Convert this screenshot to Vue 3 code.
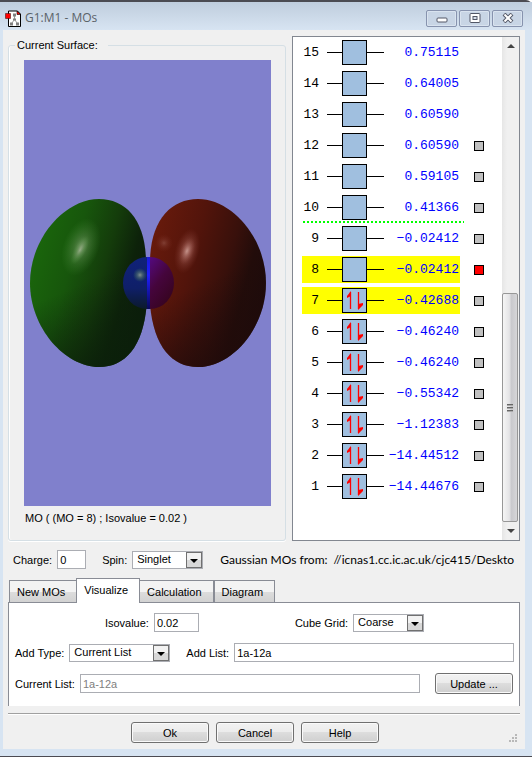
<template>
  <div class="window">
    <header class="titlebar">
      <svg class="app-icon" width="16" height="17" viewBox="0 0 16 17" aria-hidden="true">
        <path d="M3.500 1h9l3 3v12.500h-12z" fill="#fff" stroke="#000" />
        <path d="M12 1v3.500h3.500z" fill="#f00" stroke="#000" stroke-width=".6" />
        <path d="M9.500 5v5M9.500 9.500l-3 4M9.500 9.500l3 4" stroke="#999" fill="none" />
        <path d="M8 3.500h3v3h-3zM8 8.500h3v2h-3zM5 12.500h3v3h-3zM11 12.500h3v3h-3z" fill="#808080" />
        <path d="M.5 3.500h5v5h-5z" fill="#f00" stroke="#300" stroke-width=".5" />
      </svg>
      <h1>G1:M1 - MOs</h1>
      <div class="window-buttons">
        <button type="button" aria-label="Minimize">
          <svg width="12" height="10" viewBox="0 0 12 10">
            <rect x="1" y="5" width="10" height="4" rx="1" fill="#fff" stroke="#525766" />
          </svg>
        </button>
        <button type="button" aria-label="Maximize">
          <svg width="12" height="10" viewBox="0 0 12 10">
            <rect x="1" y=".5" width="10" height="9" rx="1" fill="#fff" stroke="#525766" />
            <rect x="4" y="3.500" width="4" height="3" fill="#d5deea" stroke="#525766" />
          </svg>
        </button>
        <button type="button" aria-label="Close">
          <svg width="12" height="10" viewBox="0 0 12 10">
            <path d="M2 1l8 8M10 1l-8 8" stroke="#525766" stroke-width="4" />
            <path d="M2.500 1.500l7 7M9.500 1.500l-7 7" stroke="#fff" stroke-width="2" />
          </svg>
        </button>
      </div>
    </header>

    <main class="client">
      <div class="views">
        <fieldset class="surface">
          <legend>Current Surface:</legend>
          <div class="surface-body">
            <svg class="canvas" viewBox="0 0 247 446" preserveAspectRatio="xMidYMid meet" role="img" aria-label="Molecular orbital">
              <defs>
                <linearGradient id="green" x1="0" y1=".1" x2="1" y2=".5">
                  <stop offset="0" stop-color="#1b6b0c" />
                  <stop offset=".4" stop-color="#17560c" />
                  <stop offset=".65" stop-color="#143c0b" />
                  <stop offset=".85" stop-color="#0d220a" />
                  <stop offset="1" stop-color="#0b1c0b" />
                </linearGradient>
                <linearGradient id="red" x1="0" y1=".1" x2="1" y2=".5">
                  <stop offset="0" stop-color="#6b1b0c" />
                  <stop offset=".4" stop-color="#52140b" />
                  <stop offset=".68" stop-color="#38100b" />
                  <stop offset=".85" stop-color="#220c0a" />
                  <stop offset="1" stop-color="#1e0b0b" />
                </linearGradient>
                <linearGradient id="shadeGreen" x1=".3" y1="0" x2=".6" y2="1">
                  <stop offset=".5" stop-color="#0b200a" stop-opacity="0" />
                  <stop offset="1" stop-color="#0b200a" stop-opacity=".8" />
                </linearGradient>
                <linearGradient id="shadeRed" x1=".3" y1="0" x2=".6" y2="1">
                  <stop offset=".5" stop-color="#200b0a" stop-opacity="0" />
                  <stop offset="1" stop-color="#200b0a" stop-opacity=".8" />
                </linearGradient>
                <radialGradient id="shine">
                  <stop offset="0" stop-color="#b0bca0" stop-opacity=".7" />
                  <stop offset=".4" stop-color="#80a870" stop-opacity=".4" />
                  <stop offset="1" stop-color="#50a040" stop-opacity="0" />
                </radialGradient>
                <radialGradient id="shineRed">
                  <stop offset="0" stop-color="#d0a098" stop-opacity=".7" />
                  <stop offset=".4" stop-color="#b07068" stop-opacity=".4" />
                  <stop offset="1" stop-color="#904038" stop-opacity="0" />
                </radialGradient>
                <linearGradient id="atomLeft" x1="0" y1="0" x2="0" y2="1">
                  <stop offset="0" stop-color="#10227a" />
                  <stop offset=".6" stop-color="#0f1f68" />
                  <stop offset="1" stop-color="#0b1a2c" />
                </linearGradient>
                <linearGradient id="atomRight" x1="0" y1="0" x2=".6" y2="1">
                  <stop offset="0" stop-color="#540a80" />
                  <stop offset=".5" stop-color="#45053c" />
                  <stop offset="1" stop-color="#36041f" />
                </linearGradient>
                <linearGradient id="atomMid" x1="0" y1="0" x2="0" y2="1">
                  <stop offset="0" stop-color="#1a1ad8" />
                  <stop offset=".35" stop-color="#2020ff" />
                  <stop offset="1" stop-color="#080858" />
                </linearGradient>
              </defs>
              <path :d="lobe" fill="url(#green)" />
              <path :d="lobe" fill="url(#shadeGreen)" />
              <ellipse cx="57" cy="187" rx="18" ry="30" transform="rotate(20 57 187)" fill="url(#shine)" opacity=".8" />
              <ellipse cx="56" cy="190" rx="6" ry="16" transform="rotate(28 56 190)" fill="url(#shine)" />
              <path :d="lobeRight" fill="url(#red)" />
              <path :d="lobeRight" fill="url(#shadeRed)" />
              <ellipse cx="163" cy="191" rx="12" ry="23" transform="rotate(15 163 191)" fill="url(#shineRed)" />
              <ellipse cx="163" cy="191" rx="7" ry="14" transform="rotate(20 163 191)" fill="url(#shineRed)" />
              <ellipse cx="140" cy="183" rx="9" ry="9" fill="url(#shineRed)" opacity=".4" />
              <path d="M123 197a24 26 0 0 0 0 52z" fill="url(#atomLeft)" />
              <path d="M126 197a24 26 0 0 1 0 52z" fill="url(#atomRight)" />
              <path d="M123 197h3v52h-3z" fill="url(#atomMid)" />
              <circle cx="116" cy="215" r="7" fill="url(#shine)" />
            </svg>
            <p>MO ( (MO = 8) ; Isovalue = 0.02 )</p>
          </div>
        </fieldset>

        <section class="levels" aria-label="Molecular orbitals">
          <ol>
            <li v-for="mo in orbitals" :key="mo.id" :class="{ lumo: mo.id === 10 }">
              <div class="level" :class="{ marked: mo.id === 7 || mo.id === 8 }">
                <span class="number">{{ mo.id }}</span>
                <span class="bar">
                  <span class="box">
                    <svg v-if="mo.id < 8" width="23" height="23" viewBox="0 0 23 23">
                      <path d="M7.500 20V3M15.500 3v17" fill="none" stroke="#f00" stroke-width="1.300" />
                      <path d="M8 2v5L4 9V7zM15 21v-6l5-1v2z" fill="#f00" />
                    </svg>
                  </span>
                </span>
                <span class="energy">{{ mo.energy }}</span>
              </div>
              <input
                v-if="mo.id < 13"
                v-model="selected"
                type="checkbox"
                :value="mo.id"
                :aria-label="'Orbital ' + mo.id"
              />
            </li>
          </ol>
          <div class="scrollbar">
            <button type="button" aria-label="Scroll up">
              <svg width="8" height="4" viewBox="0 0 8 4"><path d="M0 4l4-4 4 4z" fill="#444" /></svg>
            </button>
            <div class="track">
              <div class="thumb"><i></i><i></i><i></i></div>
            </div>
            <button type="button" aria-label="Scroll down">
              <svg width="8" height="4" viewBox="0 0 8 4"><path d="M0 0l4 4 4-4z" fill="#444" /></svg>
            </button>
          </div>
        </section>
      </div>

      <div class="row info">
        <label for="charge">Charge:</label>
        <input id="charge" v-model="charge" class="short" type="text" />
        <label for="spin" class="spaced">Spin:</label>
        <span class="select">
          <select id="spin" v-model="spin">
            <option>Singlet</option>
            <option>Triplet</option>
          </select>
          <span class="arrow"></span>
        </span>
        <p class="source"><span>Gaussian MOs from:</span><span>//icnas1.cc.ic.ac.uk/cjc415/Deskto</span></p>
      </div>

      <div class="tabs" role="tablist">
        <button
          v-for="name in tabs"
          :key="name"
          type="button"
          role="tab"
          :aria-selected="name === tab"
          :class="{ active: name === tab }"
          @click="tab = name"
        >{{ name }}</button>
      </div>

      <section class="panel" role="tabpanel">
        <div class="row centered">
          <label for="isovalue">Isovalue:</label>
          <input id="isovalue" v-model="isovalue" class="medium" type="text" />
          <label for="grid" class="far">Cube Grid:</label>
          <span class="select">
            <select id="grid" v-model="grid">
              <option>Coarse</option>
              <option>Medium</option>
              <option>Fine</option>
            </select>
            <span class="arrow"></span>
          </span>
        </div>
        <div class="row">
          <label for="type">Add Type:</label>
          <span class="select wide">
            <select id="type" v-model="addType">
              <option>Current List</option>
            </select>
            <span class="arrow"></span>
          </span>
          <label for="list" class="spaced">Add List:</label>
          <input id="list" v-model="addList" class="grow" type="text" />
        </div>
        <div class="row">
          <label for="current">Current List:</label>
          <input id="current" class="grow" type="text" :value="addList" disabled />
          <button type="button" class="push update">Update ...</button>
        </div>
      </section>

      <footer>
        <button type="button" class="push">Ok</button>
        <button type="button" class="push">Cancel</button>
        <button type="button" class="push">Help</button>
        <svg class="grip" width="9" height="9" viewBox="0 0 9 9" aria-hidden="true">
          <path d="M6 0h2v2h-2zM3 3h2v2h-2zM6 3h2v2h-2zM0 6h2v2h-2zM3 6h2v2h-2zM6 6h2v2h-2z" fill="#b8b8b8" />
        </svg>
      </footer>
    </main>
  </div>
</template>

<script setup>
import { ref } from 'vue'

const energies = [
  '0.75115', '0.64005', '0.60590', '0.60590', '0.59105',
  '0.41366', '−0.02412', '−0.02412', '−0.42688', '−0.46240',
  '−0.46240', '−0.55342', '−1.12383', '−14.44512', '−14.44676'
]
const orbitals = energies.map((energy, i) => ({ id: energies.length - i, energy }))

const lobe = 'M75 139C102 139 121 160 122 200L122.700 245C119 287 101 307 75 307C41 307 6 268 6 223C6 178 41 139 75 139Z'
const lobeRight = 'M174 139C147 139 127 160 126 200L126 245C130 287 148 307 174 307C208 307 242 268 242 223C242 178 208 139 174 139Z'

const tabs = ['New MOs', 'Visualize', 'Calculation', 'Diagram']
const tab = ref('Visualize')
const selected = ref([8])
const charge = ref('0')
const spin = ref('Singlet')
const isovalue = ref('0.02')
const grid = ref('Coarse')
const addType = ref('Current List')
const addList = ref('1a-12a')
</script>

<style>
body {
  margin: 0;
  background: #fff;
}
</style>

<style scoped>
* {
  box-sizing: border-box;
}

.window {
  padding: 0 7px 7px 3px;
  border-top: 2px solid #4b4b52;
  border-bottom: 1px solid #4b4b52;
  border-radius: 0 6px 0 0;
  background: #d7e4f2;
  color: #000;
  font: 11px/14px "Liberation Sans", Arial, sans-serif;
}

.titlebar {
  display: flex;
  align-items: center;
  height: 28px;
  margin: 0 -7px 0 -3px;
  padding: 4px 9px 0 5px;
  background: linear-gradient(#bfcddd, #d7e4f2);
}

h1 {
  flex: 1;
  margin: 0 0 0 4px;
  color: #5a6268;
  font: 12px/16px "Open Sans", "Noto Sans", sans-serif;
}

.window-buttons {
  display: flex;
  gap: 2px;
}

.window-buttons button {
  display: flex;
  align-items: center;
  justify-content: center;
  width: 31px;
  height: 17px;
  padding: 0;
  border: 1px solid #8793ae;
  border-radius: 2px;
  background: #c8d5e5;
  box-shadow: inset 0 0 0 1px #d9e3ef;
}

.client {
  padding: 6px 5px;
  background: #f0f0f0;
}

.views {
  display: flex;
  gap: 6px;
}

.surface {
  display: flex;
  flex: 1;
  min-width: 0;
  margin: 2px 0 0;
  padding: 0 14px 15px 15px;
  border: 1px solid #d5dfe5;
  border-radius: 3px;
  box-shadow: inset 1px 0 #fff, 0 1px #fff;
}

.surface legend {
  margin-left: -9px;
  padding: 0 10px 0 2px;
}

.surface-body {
  display: flex;
  flex: 1;
  flex-direction: column;
  min-width: 0;
}

.canvas {
  flex: 1;
  width: 100%;
  min-height: 0;
  margin-top: 8px;
  background: #8080cc;
}

.surface p {
  margin: 5px 0 0 1px;
}

.levels {
  display: flex;
  width: 228px;
  border: 1px solid #828790;
  background: #fff;
}

ol {
  flex: 1;
  margin: 0;
  padding: 0 0 38px 9px;
  list-style: none;
}

li {
  position: relative;
  display: flex;
  align-items: center;
  gap: 14px;
  height: 31px;
}

.lumo::after {
  position: absolute;
  bottom: 0;
  left: 1px;
  width: 161px;
  height: 2px;
  background: repeating-linear-gradient(90deg, #0f0 0 2px, #fff 2px 4px);
  content: "";
}

.level {
  display: flex;
  align-items: center;
  width: 158px;
  height: 27px;
  font: 13px/16px "Liberation Mono", "Courier New", monospace;
}

.marked {
  background: #ff0;
}

.number {
  width: 17px;
  text-align: right;
}

.bar {
  display: flex;
  width: 57px;
  margin-left: 8px;
  padding-left: 15px;
  background: linear-gradient(#000, #000) center / 100% 1px no-repeat;
}

.box {
  width: 25px;
  height: 25px;
  border: 1px solid #000;
  background: #a0bfdf;
}

.box svg {
  display: block;
}

.energy {
  flex: 1;
  margin: 0 1px 0 -10px;
  color: #00f;
  text-align: right;
}

li input {
  width: 10px;
  height: 10px;
  margin: 0;
  border: 1px solid #000;
  background: #c0c0c0;
  appearance: none;
}

li input:checked {
  background: #f00;
}

.scrollbar {
  display: flex;
  flex-direction: column;
  width: 17px;
  background: linear-gradient(90deg, #e6e6e6, #f0f0f0 30%);
}

.scrollbar button {
  display: flex;
  align-items: center;
  justify-content: center;
  height: 18px;
  padding: 0;
  border: 0;
  background: none;
}

.track {
  display: flex;
  flex: 1;
  flex-direction: column;
  justify-content: flex-end;
}

.thumb {
  display: flex;
  flex-direction: column;
  align-items: center;
  justify-content: center;
  gap: 1px;
  height: 49%;
  margin: 0 1px 0 0;
  border: 1px solid #979797;
  border-radius: 2px;
  background: linear-gradient(90deg, #f5f5f5, #e4e4e6 45%, #c9c9cd 60%, #d6d6d8);
}

.thumb i {
  width: 6px;
  height: 2px;
  border-top: 1px solid #666;
  background: #aaa;
}

.row {
  display: flex;
  align-items: center;
  gap: 5px;
}

.info {
  margin: 9px 0 10px;
  padding-left: 5px;
}

.row input {
  height: 19px;
  padding: 0 2px;
  border: 1px solid #abadb3;
  background: #fff;
  color: #000;
  font: inherit;
}

.row input:disabled {
  color: #808080;
}

.row .short {
  width: 29px;
}

.row .medium {
  width: 45px;
}

.row .grow {
  flex: 1;
  min-width: 0;
}

.spaced {
  margin-left: 11px;
}

.select {
  position: relative;
  display: flex;
  width: 71px;
}

.wide {
  width: 101px;
}

select {
  width: 100%;
  height: 18px;
  padding: 0 18px 1px 4px;
  border: 1px solid #abadb3;
  border-radius: 0;
  background: #fff;
  color: #000;
  font: inherit;
  appearance: none;
}

.arrow {
  position: absolute;
  top: 1px;
  right: 1px;
  display: flex;
  align-items: center;
  justify-content: center;
  width: 16px;
  height: 16px;
  border: 1px solid #707070;
  background: linear-gradient(#f2f2f2 50%, #d8d8d8 50%);
  pointer-events: none;
}

.arrow::after {
  margin-top: 3px;
  border: 4px solid transparent;
  border-top-color: #000;
  border-bottom: 0;
  content: "";
}

.source {
  display: flex;
  flex: 1;
  gap: 6px;
  min-width: 0;
  margin: 0 0 0 12px;
  overflow: hidden;
  font: 12px/16px Lato, "Open Sans", sans-serif;
  white-space: nowrap;
}

.tabs {
  display: flex;
  align-items: flex-end;
  height: 23px;
  padding-left: 1px;
}

.tabs button {
  height: 22px;
  padding: 0 11px 0 7px;
  border: 1px solid #898c95;
  border-bottom: 0;
  background: linear-gradient(#f3f3f3 50%, #ddd 50%, #d2d2d2);
  color: #000;
  font: inherit;
}

.tabs .active {
  z-index: 1;
  height: 25px;
  margin: 0 -1px -1px;
  padding-bottom: 3px;
  background: #fff;
}

.panel {
  display: flex;
  flex-direction: column;
  gap: 11px;
  padding: 10px 5px 12px 6px;
  border: 1px solid #898c95;
  border-bottom: 0;
  background: #fff;
}

.centered {
  justify-content: center;
}

.far {
  margin-left: 91px;
}

.push {
  width: 78px;
  height: 21px;
  padding: 0;
  border: 1px solid #707070;
  border-radius: 3px;
  background: linear-gradient(#f2f2f2, #ebebeb 50%, #ddd 50%, #cfcfcf);
  box-shadow: inset 0 0 0 1px #fafafa;
  color: #000;
  font: inherit;
}

.update {
  margin: 0 1px 0 10px;
}

footer {
  position: relative;
  display: flex;
  justify-content: center;
  gap: 7px;
  margin-top: 7px;
  padding: 8px 18px 0 0;
  border-top: 1px solid #a0a0a0;
  box-shadow: inset 0 1px #fff;
}

.grip {
  position: absolute;
  right: 2px;
  bottom: 0;
}
</style>
